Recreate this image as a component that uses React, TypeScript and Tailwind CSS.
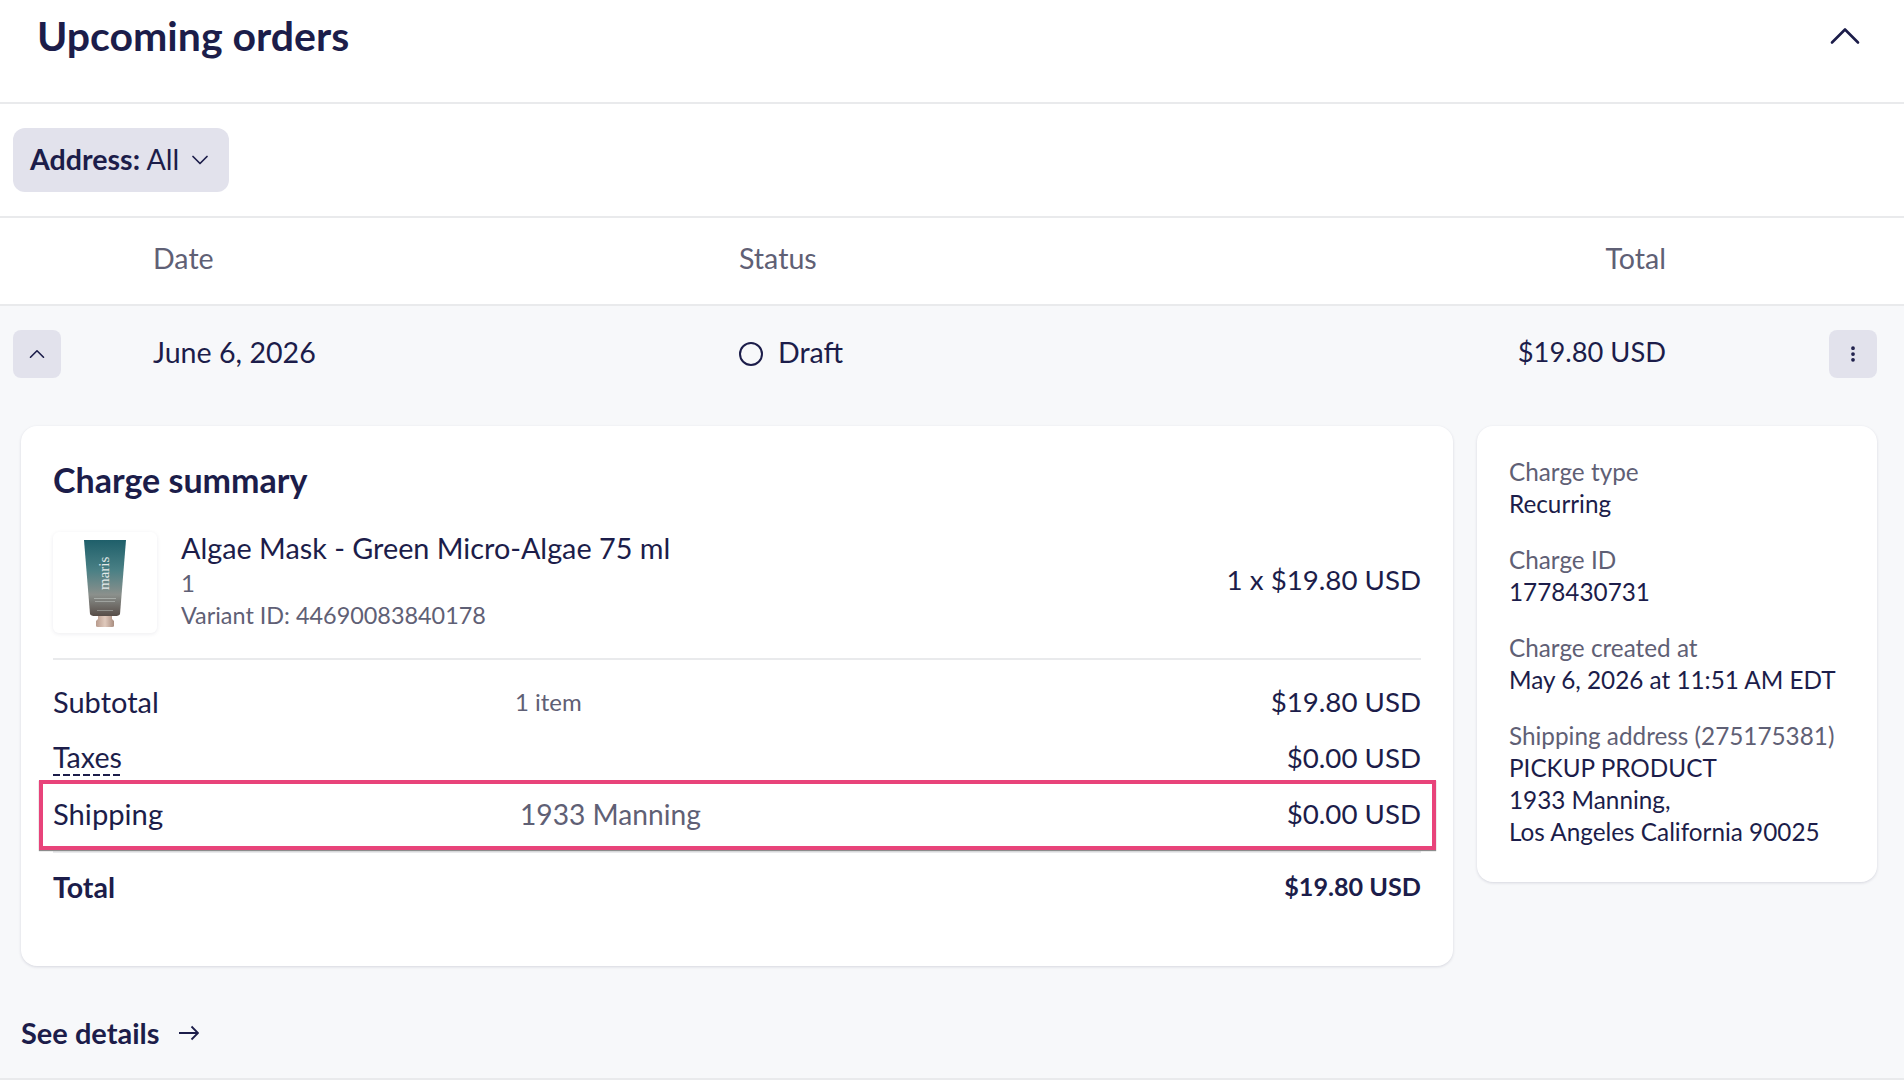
import { ChevronDown, ChevronUp, EllipsisVertical } from 'lucide-react';
import type { ReactNode } from 'react';

const summaryRows = [
  { label: 'Subtotal', note: '1 item', value: '$19.80 USD' },
  { label: 'Taxes', value: '$0.00 USD' },
];

const details: { label: string; lines: string[] }[] = [
  { label: 'Charge type', lines: ['Recurring'] },
  { label: 'Charge ID', lines: ['1778430731'] },
  { label: 'Charge created at', lines: ['May 6, 2026 at 11:51 AM EDT'] },
  {
    label: 'Shipping address (275175381)',
    lines: ['PICKUP PRODUCT', '1933 Manning,', 'Los Angeles California 90025'],
  },
];

const TubeImage = () => (
  <div className="flex h-[101px] w-[104px] shrink-0 items-center justify-center rounded-md bg-white shadow-[0_1px_4px_rgba(30,30,70,0.08)]">
    <svg width="46" height="90" viewBox="0 0 46 90">
      <defs>
        <linearGradient id="tube" x1="0" y1="0" x2="0" y2="1">
          <stop offset="0" stopColor="#1f5f6a" />
          <stop offset="0.4" stopColor="#4a8085" />
          <stop offset="0.72" stopColor="#8b908c" />
          <stop offset="1" stopColor="#574d48" />
        </linearGradient>
        <linearGradient id="cap" x1="0" y1="0" x2="1" y2="0">
          <stop offset="0" stopColor="#b89b8d" />
          <stop offset="0.5" stopColor="#e0cabd" />
          <stop offset="1" stopColor="#a98d80" />
        </linearGradient>
      </defs>
      <path d="M2 2H44L38 76Q37 78 33 78H13Q9 78 8 76Z" fill="url(#tube)" />
      <path d="M16 78H30V81L32 83V88Q32 89 30 89H16Q14 89 14 88V83L16 81Z" fill="url(#cap)" />
      <text
        transform="translate(27 52) rotate(-90)"
        fontFamily="Liberation Serif, serif"
        fontSize="15"
        fill="#e3eaea"
      >
        maris
      </text>
      <rect x="12" y="60" width="22" height="1" fill="#b7bdb9" opacity="0.7" />
      <rect x="13" y="63" width="20" height="1" fill="#b7bdb9" opacity="0.6" />
      <rect x="15" y="72" width="16" height="1" fill="#b7bdb9" opacity="0.5" />
    </svg>
  </div>
);

const Row = ({ children }: { children: ReactNode }) => (
  <div className="flex h-[56px] items-center justify-between">{children}</div>
);

export default function App() {
  return (
    <div className="min-h-[1084px] bg-white font-['Lato',sans-serif] text-[28.6px] text-[#1c1d4a]">
      <div className="flex h-[104px] items-center justify-between border-b-2 border-[#e9eaec] pb-[30px] pl-[37px] pr-[33px]">
        <h2 className="text-[41px] font-bold">Upcoming orders</h2>
        <ChevronUp size={52} strokeWidth={1.2} />
      </div>

      <div className="h-[114px] border-b-2 border-[#e9eaec] pl-[13px] pt-[24px]">
        <button className="flex h-[64px] w-[216px] items-center gap-[7px] rounded-xl bg-[#e2e2ec] pl-[17px]">
          <span className="whitespace-nowrap pb-[2px]">
            <b>Address:</b> All
          </span>
          <ChevronDown size={28} strokeWidth={1.5} />
        </button>
      </div>

      <div className="flex h-[88px] items-center border-b-2 border-[#e9eaec] pb-[5px] text-[#5f6075]">
        <div className="w-[153px]" />
        <div className="w-[586px]">Date</div>
        <div className="flex w-[927px] justify-between">
          <span>Status</span>
          <span>Total</span>
        </div>
      </div>

      <div className="border-b-2 border-[#e9eaec] bg-[#f7f8fa] pb-[26px]">
        <div className="flex h-[120px] items-center pb-[24px] pl-[13px] pr-[27px]">
          <button className="flex h-[48px] w-[48px] items-center justify-center rounded-lg bg-[#e2e2ec]">
            <ChevronUp size={26} strokeWidth={1.5} />
          </button>
          <div className="ml-[92px] w-[586px] pb-[4px]">June 6, 2026</div>
          <div className="flex w-[927px] items-center justify-between">
            <span className="flex items-center gap-[15px]">
              <span className="h-[24px] w-[24px] rounded-full border-2 border-[#1c1d4a]" />
              <span className="pb-[4px]">Draft</span>
            </span>
            <span className="pb-[4px] text-[27.3px]">$19.80 USD</span>
          </div>
          <button className="ml-auto flex h-[48px] w-[48px] items-center justify-center rounded-lg bg-[#e2e2ec]">
            <EllipsisVertical size={20} strokeWidth={2.5} />
          </button>
        </div>

        <div className="flex items-start gap-[24px] pl-[21px] pr-[27px]">
          <div className="h-[540px] w-[1432px] rounded-2xl bg-white px-[32px] pt-[34px] shadow-[0_1px_3px_rgba(30,30,70,0.15)]">
            <h3 className="text-[34px] font-bold leading-[40px]">Charge summary</h3>
            <div className="mt-[30px] flex items-center border-b-2 border-[#e9eaec] pb-[23px]">
              <TubeImage />
              <div className="ml-[24px] flex-1 pb-[4px]">
                <div className="text-[28.8px] leading-[37px]">Algae Mask - Green Micro-Algae 75 ml</div>
                <div className="text-[24px] leading-[32px] text-[#5f6075]">1</div>
                <div className="text-[23.4px] leading-[32px] text-[#5f6075]">Variant ID: 44690083840178</div>
              </div>
              <div className="pb-[6px] text-[27.7px]">1 x $19.80 USD</div>
            </div>
            <div className="mt-[14px]">
              {summaryRows.map((row) => (
                <Row key={row.label}>
                  {row.note ? (
                    <span className="w-[462px] text-[29px]">{row.label}</span>
                  ) : (
                    <span className="flex flex-col">
                      <span className="leading-[34px]">{row.label}</span>
                      <span className="h-[2px] bg-[repeating-linear-gradient(90deg,#1c1d4a_0_7px,transparent_7px_10px)]" />
                    </span>
                  )}
                  {row.note && <span className="mr-auto text-[24px] text-[#5f6075]">{row.note}</span>}
                  <span className="text-[27.7px]">{row.value}</span>
                </Row>
              ))}
              <div className="relative">
                <Row>
                  <span className="w-[467px] text-[29.2px]">Shipping</span>
                  <span className="mr-auto text-[28.2px] text-[#5f6075]">1933 Manning</span>
                  <span className="text-[27.7px]">$0.00 USD</span>
                </Row>
                <div className="absolute -bottom-[8px] -left-[14px] -right-[15px] -top-[6px] border-4 border-[#e8437a] shadow-[0_1px_1px_rgba(0,0,0,0.45)]" />
              </div>
              <div className="mt-[9px] border-b-2 border-[#e9eaec]" />
              <div className="mt-[6px] flex h-[56px] items-center justify-between font-bold">
                <span>Total</span>
                <span className="text-[25.2px]">$19.80 USD</span>
              </div>
            </div>
          </div>

          <div className="flex h-[456px] w-[400px] flex-col gap-[24px] rounded-2xl bg-white pl-[32px] pt-[30px] text-[24.3px] leading-[32px] shadow-[0_1px_3px_rgba(30,30,70,0.15)]">
            {details.map((item) => (
              <div key={item.label}>
                <div className="text-[#5f6075]">{item.label}</div>
                {item.lines.map((line) => (
                  <div key={line}>{line}</div>
                ))}
              </div>
            ))}
          </div>
        </div>

        <div className="mt-[48px] flex h-[38px] items-center gap-[19px] pl-[21px] text-[29px] font-bold">
          See details
          <svg width="20" height="16" viewBox="0 0 20 16" fill="none" stroke="currentColor" strokeWidth="1.8">
            <path d="M0 8H19M12.5 1.5L19 8L12.5 14.5" />
          </svg>
        </div>
      </div>
    </div>
  );
}
